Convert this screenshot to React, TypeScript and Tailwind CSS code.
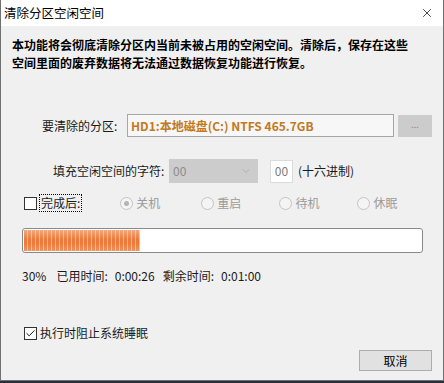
import { X, ChevronDown, Check } from 'lucide-react';

const Radio = ({ label, checked }: { label: string; checked?: boolean }) => (
  <div className="flex items-center gap-[3px]">
    <div className="w-[13px] h-[13px] rounded-full border border-[#c4c4c4] bg-[#f4f4f4] flex items-center justify-center">
      {checked && <div className="w-[5px] h-[5px] rounded-full bg-[#b4b4b4]" />}
    </div>
    <span className="text-[#9a9a9a]">{label}</span>
  </div>
);

export default function App() {
  return (
    <div className="w-[444px] h-[383px] flex flex-col bg-[#2b2e3b] overflow-hidden font-['Noto_Sans_CJK_SC','Microsoft_YaHei',sans-serif] text-[12px] leading-[18px] text-[#1a1a1a]">
      <div className="h-[381px] flex flex-col border-x border-b border-[#707070] bg-[#f0f0f0]">
        {/* title bar */}
        <div className="h-[26px] shrink-0 bg-white flex items-center justify-between pl-[3px] pr-[9px]">
          <span className="text-[12.5px] text-black">清除分区空闲空间</span>
          <X className="w-[14px] h-[14px] text-black" strokeWidth={1.2} />
        </div>

        {/* description */}
        <div className="pl-[11px] pt-[10px] font-bold text-black">
          <p>本功能将会彻底清除分区内当前未被占用的空闲空间。清除后，保存在这些</p>
          <p>空间里面的废弃数据将无法通过数据恢复功能进行恢复。</p>
        </div>

        {/* partition row */}
        <div className="mt-[42px] flex items-center h-[23px]">
          <span className="pl-[41px] w-[126px]">要清除的分区:</span>
          <div className="w-[267px] h-[23px] border border-[#a6a6a6] bg-[#f7f7f7] flex items-center pl-[3px] font-bold text-[#c27a22]">
            HD1:本地磁盘(C:) NTFS 465.7GB
          </div>
          <div className="ml-[4px] w-[34px] h-[22px] bg-[#cccccc] flex items-center justify-center text-[#8a8a8a] text-[9px] leading-none pb-[2px]">
            ...
          </div>
        </div>

        {/* fill char row */}
        <div className="mt-[22px] flex items-center h-[24px]">
          <span className="pl-[52px] w-[168px]">填充空闲空间的字符:</span>
          <div className="w-[89px] h-[24px] bg-[#cccccc] flex items-center justify-between pl-[4px] pr-[6px] text-[#8d8d8d]">
            <span>00</span>
            <ChevronDown className="w-[12px] h-[12px] text-[#a8a8a8]" strokeWidth={1.5} />
          </div>
          <div className="ml-[12px] w-[23px] h-[23px] bg-white border border-[#dcdcdc] flex items-center justify-center text-[#7a7a7a]">
            00
          </div>
          <span className="ml-[5px]">(十六进制)</span>
        </div>

        {/* after completion row */}
        <div className="mt-[11px] flex items-center h-[18px] pl-[23px]">
          <div className="w-[13px] h-[13px] border border-[#333] bg-white" />
          <span className="ml-[2px] px-[1px] border border-dotted border-black leading-[16px]">完成后:</span>
          <div className="ml-[38px] flex items-center">
            <Radio label="关机" checked />
            <div className="ml-[41px]"><Radio label="重启" /></div>
            <div className="ml-[38px]"><Radio label="待机" /></div>
            <div className="ml-[38px]"><Radio label="休眠" /></div>
          </div>
        </div>

        {/* progress */}
        <div className="mt-[16px] ml-[21px] w-[401px] h-[25px] rounded-[3px] border border-[#8a8a8a] bg-white p-[1px]">
          <div className="relative w-[116px] h-full bg-[repeating-linear-gradient(90deg,#ee7a3a_0px,#ee7a3a_3px,#f7b48c_3px,#f7b48c_4px)]">
            <div className="absolute inset-0 bg-[linear-gradient(180deg,rgba(255,255,255,0.35),rgba(255,255,255,0)_45%,rgba(255,255,255,0)_65%,rgba(255,255,255,0.2))]" />
          </div>
        </div>

        {/* stats */}
        <div className="mt-[14px] pl-[21px] flex items-center">
          <span>30%</span>
          <span className="ml-[10px]">已用时间:</span>
          <span className="ml-[7px]">0:00:26</span>
          <span className="ml-[8px]">剩余时间:</span>
          <span className="ml-[7px]">0:01:00</span>
        </div>

        {/* prevent sleep */}
        <div className="mt-[39px] pl-[23px] flex items-center">
          <div className="w-[13px] h-[13px] border border-[#333] bg-white flex items-center justify-center">
            <Check className="w-[11px] h-[11px] text-black" strokeWidth={2} />
          </div>
          <span className="ml-[3px]">执行时阻止系统睡眠</span>
        </div>

        {/* footer */}
        <div className="mt-[8px] flex justify-end pr-[11px]">
          <button className="w-[73px] h-[21px] bg-[#e1e1e1] border border-[#adadad] flex items-center justify-center text-black">
            取消
          </button>
        </div>
      </div>
    </div>
  );
}
